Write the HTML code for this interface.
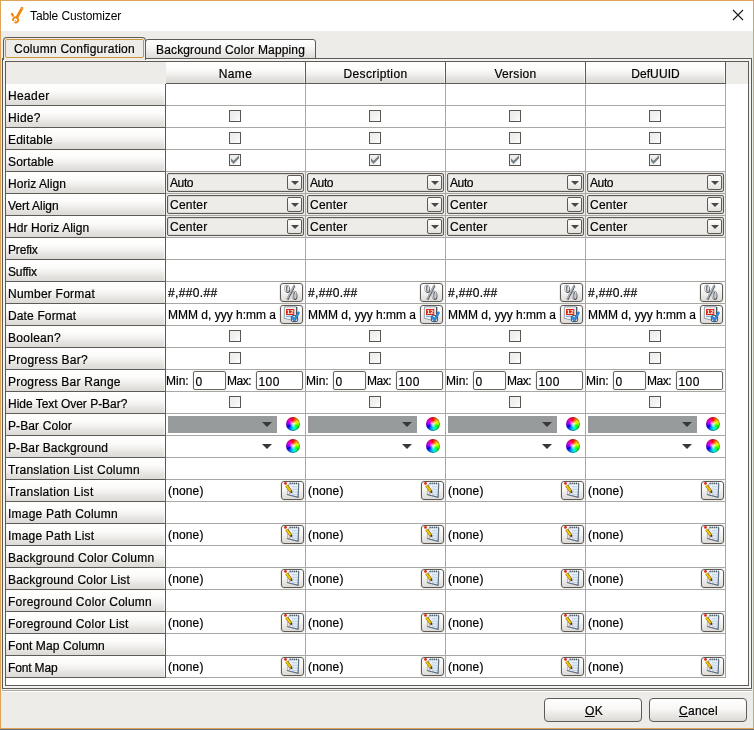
<!DOCTYPE html>
<html><head><meta charset="utf-8"><title>Table Customizer</title>
<style>
html,body{margin:0;padding:0;}
body{will-change:transform;-webkit-text-stroke:0.2px #000;width:754px;height:730px;overflow:hidden;background:#eeece9;font-family:"Liberation Sans",sans-serif;font-size:12px;color:#000;position:relative;}
div,span{box-sizing:border-box;}
.a{position:absolute;}
#win{left:0;top:0;width:754px;height:730px;border:1px solid #dea459;border-bottom:none;}
#wb1{left:0;top:728px;width:754px;height:1px;background:#dea459;}
#wb2{left:0;top:729px;width:754px;height:1px;background:#646c70;}
#title{left:1px;top:1px;width:752px;height:30px;background:#fff;}
#ttext{left:30px;top:8px;font-size:12px;line-height:16px;white-space:nowrap;letter-spacing:-0.1px;-webkit-text-stroke:0;}
.t{white-space:nowrap;line-height:14px;}
.rh{left:6px;width:160px;height:22px;border-right:1px solid #5e5b56;border-bottom:1px solid #5e5b56;background:linear-gradient(#ffffff 0%,#fdfdfc 30%,#f3f2f0 55%,#e4e2df 80%,#dddbd7 100%);box-shadow:inset -1px 0 0 rgba(255,255,255,.6);}
.rh span{position:absolute;left:2px;top:5px;line-height:14px;white-space:nowrap;}
.ch{top:62px;width:140px;height:22px;border-right:1px solid #5e5b56;border-bottom:1px solid #5e5b56;background:linear-gradient(#ffffff 0%,#fdfdfc 30%,#f3f2f0 55%,#e3e1de 80%,#dbd9d5 100%);box-shadow:inset -1px 0 0 rgba(255,255,255,.6);text-align:center;}
.ch span{position:absolute;left:0;right:0;top:5px;line-height:14px;text-align:center;}
.hl{left:166px;width:560px;height:1px;background:#aaa8a4;}
.vl{top:84px;width:1px;height:594px;background:#aaa8a4;}
.cb{width:12px;height:12px;border:1px solid #5a5752;background:linear-gradient(135deg,#ededec 0%,#f1f1f0 50%,#ffffff 100%);}
.cellbg{width:139px;height:21px;background:#eeece9;}
.combo{width:137px;height:19px;border:1px solid #5e5b56;border-radius:2px;background:#eeece9;box-shadow:inset 0 0 0 1px #d9d7d3;}
.combo span{position:absolute;left:2px;top:2px;line-height:14px;}
.cbtn{left:119px;top:1px;width:15px;height:15px;border:1px solid #5e5b56;border-radius:2px;background:linear-gradient(#ffffff,#e4e2de);}
.tri{width:0;height:0;border-left:4px solid transparent;border-right:4px solid transparent;border-top:4px solid #4a4744;}
.btn{width:23px;height:19px;border:1px solid #5e5b56;border-radius:3px;box-shadow:0 0 0 1px #efedea;background:linear-gradient(#ffffff 0%,#f6f5f4 45%,#dddad6 100%);}
.pct{left:1.8px;top:-4px;font-family:"Liberation Serif",serif;font-size:21px;line-height:24px;font-weight:bold;color:#e4e7ea;-webkit-text-stroke:0.5px #6d737a;text-shadow:0.9px 0.5px 0 #4c5157;transform:scaleX(.72);transform-origin:0 0;}
.tf{height:19px;border:1px solid #6a6762;border-radius:2px;background:#fff;box-shadow:0 0 0 1px #f3f2f0;}
.tf span{position:absolute;left:1.5px;top:3px;line-height:14px;}
.sw{width:109px;height:17px;}
.tri2{width:0;height:0;border-left:5.5px solid transparent;border-right:5.5px solid transparent;border-top:5.5px solid #383838;}
.wheel{width:14px;height:14px;border-radius:50%;background:radial-gradient(circle,rgba(255,255,255,.9) 0%,rgba(255,255,255,0) 38%),conic-gradient(#ff0000,#ffb000 12%,#e0ff00 20%,#00ff00 33%,#00ffd0 45%,#00b0ff 55%,#0000ff 67%,#b000ff 78%,#ff00c0 88%,#ff0000);box-shadow:inset 0 0 0 1px rgba(60,30,60,.45);}
.bigbtn{height:24px;border:1px solid #5e5b56;border-radius:4px;background:linear-gradient(#ffffff 0%,#f8f7f6 45%,#dcd9d5 100%);text-align:center;}
.bigbtn span{position:absolute;left:0;right:0;top:5px;line-height:14px;}
u{text-decoration:underline;}
</style></head><body>
<div class="a" id="title"></div>
<svg class="a" style="left:6px;top:4px" width="24" height="24" viewBox="6 4 24 24"><g fill="none" stroke="#f5850f" stroke-linecap="round"><path d="M22.1 8.2 L17.2 17" stroke-width="2.7"/><path d="M21.6 8.6 L16.6 17.6" stroke-width="1.6"/><path d="M13.05 20.35 A2.6 2.6 0 1 1 15.15 22.45" stroke-width="1.9"/><path d="M11.9 13.9 L12.9 15.7" stroke-width="2.2"/></g><circle cx="22" cy="8.3" r=".6" fill="#fbd2a4"/><circle cx="15.6" cy="20.6" r=".7" fill="#f7a047"/></svg>
<div class="a" id="ttext">Table Customizer</div>
<svg class="a" style="left:732px;top:9px" width="12" height="12" viewBox="0 0 12 12"><path d="M1 1 L11 11 M11 1 L1 11" stroke="#1a1a1a" stroke-width="1.1" fill="none"/></svg>
<div class="a" style="left:2px;top:58px;width:750px;height:631px;border:1px solid #5e5b56;background:#f4f3f1"></div>
<div class="a" style="left:1px;top:689px;width:752px;height:1px;background:#f3f2f0"></div>
<div class="a" style="left:1px;top:690px;width:752px;height:1px;background:#a9a8a4"></div>
<div class="a" style="left:1px;top:691px;width:752px;height:1px;background:#ffffff"></div>
<div class="a" style="left:1px;top:31px;width:1px;height:697px;background:#e9ebee"></div>
<div class="a" style="left:752px;top:31px;width:1px;height:697px;background:#e9ebee"></div>
<div class="a" style="left:145px;top:39px;width:171px;height:20px;border:1px solid #5e5b56;border-radius:3px 3px 0 0;background:linear-gradient(#ffffff 0%,#f8f7f6 40%,#dedbd7 100%)"><span class="a t" style="left:10px;top:3px;letter-spacing:0.15px">Background Color Mapping</span></div>
<div class="a" style="left:3px;top:37px;width:143px;height:23px;border:1px solid #5e5b56;border-bottom:none;border-radius:4px 4px 0 0;background:#eeece9"></div>
<div class="a" style="left:5px;top:39px;width:139px;height:19px;border:1px solid #c9973a;border-radius:2px;"><span class="a t" style="left:8px;top:2px;letter-spacing:0.245px">Column Configuration</span></div>
<div class="a" style="left:5px;top:61px;width:744px;height:625px;border:1px solid #5e5b56;background:#fff"></div>
<div class="a" style="left:6px;top:62px;width:160px;height:22px;background:#eeece9"></div>
<div class="a" style="left:726px;top:62px;width:22px;height:22px;background:#eeece9"></div>
<div class="a ch" style="left:166px"><span style="letter-spacing:0.433px">Name</span></div>
<div class="a ch" style="left:306px"><span style="letter-spacing:0.350px">Description</span></div>
<div class="a ch" style="left:446px"><span style="letter-spacing:0.283px">Version</span></div>
<div class="a ch" style="left:586px"><span style="letter-spacing:0.100px">DefUUID</span></div>
<div class="a rh" style="top:84px"><span style="letter-spacing:0.360px">Header</span></div>
<div class="a hl" style="top:105px"></div>
<div class="a rh" style="top:106px"><span style="letter-spacing:0.275px">Hide?</span></div>
<div class="a hl" style="top:127px"></div>
<div class="a rh" style="top:128px"><span style="letter-spacing:0.200px">Editable</span></div>
<div class="a hl" style="top:149px"></div>
<div class="a rh" style="top:150px"><span style="letter-spacing:0.157px">Sortable</span></div>
<div class="a hl" style="top:171px"></div>
<div class="a rh" style="top:172px"><span style="letter-spacing:0.045px">Horiz Align</span></div>
<div class="a hl" style="top:193px"></div>
<div class="a rh" style="top:194px"><span style="letter-spacing:0.000px">Vert Align</span></div>
<div class="a hl" style="top:215px"></div>
<div class="a rh" style="top:216px"><span style="letter-spacing:0.079px">Hdr Horiz Align</span></div>
<div class="a hl" style="top:237px"></div>
<div class="a rh" style="top:238px"><span style="letter-spacing:-0.180px">Prefix</span></div>
<div class="a hl" style="top:259px"></div>
<div class="a rh" style="top:260px"><span style="letter-spacing:-0.140px">Suffix</span></div>
<div class="a hl" style="top:281px"></div>
<div class="a rh" style="top:282px"><span style="letter-spacing:0.225px">Number Format</span></div>
<div class="a hl" style="top:303px"></div>
<div class="a rh" style="top:304px"><span style="letter-spacing:0.140px">Date Format</span></div>
<div class="a hl" style="top:325px"></div>
<div class="a rh" style="top:326px"><span style="letter-spacing:0.286px">Boolean?</span></div>
<div class="a hl" style="top:347px"></div>
<div class="a rh" style="top:348px"><span style="letter-spacing:0.242px">Progress Bar?</span></div>
<div class="a hl" style="top:369px"></div>
<div class="a rh" style="top:370px"><span style="letter-spacing:0.224px">Progress Bar Range</span></div>
<div class="a hl" style="top:391px"></div>
<div class="a rh" style="top:392px"><span style="letter-spacing:-0.022px">Hide Text Over P-Bar?</span></div>
<div class="a hl" style="top:413px"></div>
<div class="a rh" style="top:414px"><span style="letter-spacing:0.110px">P-Bar Color</span></div>
<div class="a hl" style="top:435px"></div>
<div class="a rh" style="top:436px"><span style="letter-spacing:0.120px">P-Bar Background</span></div>
<div class="a hl" style="top:457px"></div>
<div class="a rh" style="top:458px"><span style="letter-spacing:0.277px">Translation List Column</span></div>
<div class="a hl" style="top:479px"></div>
<div class="a rh" style="top:480px"><span style="letter-spacing:0.287px">Translation List</span></div>
<div class="a hl" style="top:501px"></div>
<div class="a rh" style="top:502px"><span style="letter-spacing:0.225px">Image Path Column</span></div>
<div class="a hl" style="top:523px"></div>
<div class="a rh" style="top:524px"><span style="letter-spacing:0.193px">Image Path List</span></div>
<div class="a hl" style="top:545px"></div>
<div class="a rh" style="top:546px"><span style="letter-spacing:0.245px">Background Color Column</span></div>
<div class="a hl" style="top:567px"></div>
<div class="a rh" style="top:568px"><span style="letter-spacing:0.190px">Background Color List</span></div>
<div class="a hl" style="top:589px"></div>
<div class="a rh" style="top:590px"><span style="letter-spacing:0.227px">Foreground Color Column</span></div>
<div class="a hl" style="top:611px"></div>
<div class="a rh" style="top:612px"><span style="letter-spacing:0.215px">Foreground Color List</span></div>
<div class="a hl" style="top:633px"></div>
<div class="a rh" style="top:634px"><span style="letter-spacing:0.100px">Font Map Column</span></div>
<div class="a hl" style="top:655px"></div>
<div class="a rh" style="top:656px"><span style="letter-spacing:-0.157px">Font Map</span></div>
<div class="a hl" style="top:677px"></div>
<div class="a vl" style="left:305px"></div>
<div class="a vl" style="left:445px"></div>
<div class="a vl" style="left:585px"></div>
<div class="a vl" style="left:725px"></div>
<div class="a cb" style="left:229px;top:110px"></div>
<div class="a cb" style="left:229px;top:132px"></div>
<div class="a cb" style="left:229px;top:154px"><svg class="a" style="left:0;top:0" width="10" height="10" viewBox="0 0 10 10"><path d="M1 3.2 L3.5 5.8 L9 0.2 L9 3.2 L3.5 8.9 L1 6.2 Z" fill="#758087"/></svg></div>
<div class="a cb" style="left:229px;top:330px"></div>
<div class="a cb" style="left:229px;top:352px"></div>
<div class="a cb" style="left:229px;top:396px"></div>
<div class="a cellbg" style="left:166px;top:172px"></div><div class="a combo" style="left:167px;top:173px"><span style="letter-spacing:-0.4px">Auto</span><div class="a cbtn"><div class="a tri" style="left:2.5px;top:5px"></div></div></div>
<div class="a cellbg" style="left:166px;top:194px"></div><div class="a combo" style="left:167px;top:195px"><span style="letter-spacing:0.24px">Center</span><div class="a cbtn"><div class="a tri" style="left:2.5px;top:5px"></div></div></div>
<div class="a cellbg" style="left:166px;top:216px"></div><div class="a combo" style="left:167px;top:217px"><span style="letter-spacing:0.24px">Center</span><div class="a cbtn"><div class="a tri" style="left:2.5px;top:5px"></div></div></div>
<span class="a t" style="left:168px;top:286px;letter-spacing:0.35px">#,##0.##</span><div class="a btn" style="left:280px;top:283px"><span class="a pct">%</span></div>
<span class="a t" style="left:168px;top:308px">MMM d, yyy h:mm a</span><div class="a btn" style="left:280px;top:305px"><svg class="a" style="left:0;top:0" width="21" height="17" viewBox="0 0 21 17"><path d="M3.4 0.8 L15.7 0.9 L15.4 15.4 L3.3 12.3 Z" fill="#f2f5f9" stroke="#7f8a95" stroke-width=".8"/><path d="M15.7 0.9 L15.5 8" stroke="#4a5661" stroke-width="1.3"/><path d="M4.5 0.5 H15" stroke="#a4adb6" stroke-width="1" stroke-dasharray="1 1"/><rect x="5" y="3" width="8.3" height="6" fill="#d62a10"/><text x="9.15" y="8.4" font-size="6.2" font-weight="bold" fill="#fff" stroke="none" text-anchor="middle" font-family="Liberation Sans, sans-serif" style="-webkit-text-stroke:0">12</text><path d="M5 10.4 H9.8" stroke="#7fb0e0" stroke-width="1.4"/><rect x="10.4" y="9.6" width="6.2" height="6" rx="1.4" fill="rgba(255,255,255,.55)" stroke="#3c5470" stroke-width="1"/><path d="M10.9 11 L13.5 14 L17.4 6.8" fill="none" stroke="#1d5ea6" stroke-width="2.5" stroke-linecap="round" stroke-linejoin="round"/><path d="M10.9 11 L13.5 14 L17.4 6.8" fill="none" stroke="#3492e6" stroke-width="1.5" stroke-linecap="round" stroke-linejoin="round"/></svg></div>
<span class="a t" style="left:166px;top:374px">Min:</span><div class="a tf" style="left:193px;top:371px;width:33px"><span>0</span></div><span class="a t" style="left:227px;top:374px;letter-spacing:-0.5px">Max:</span><div class="a tf" style="left:256px;top:371px;width:47px"><span style="letter-spacing:0.4px">100</span></div>
<div class="a sw" style="left:168px;top:416px;background:#979b9c"></div><div class="a tri2" style="left:262px;top:422px"></div><div class="a wheel" style="left:286px;top:417px"></div>
<div class="a tri2" style="left:262px;top:444px"></div><div class="a wheel" style="left:286px;top:439px"></div>
<span class="a t" style="left:168px;top:484px;letter-spacing:0.15px">(none)</span><div class="a btn" style="left:281px;top:481px"><svg class="a" style="left:0;top:0" width="21" height="17" viewBox="0 0 21 17"><path d="M7 1.6 L16.7 1.6 L16.1 15.3 L5.1 12.5 Z" fill="#eaf1f8" stroke="#94a6b7" stroke-width=".8"/><path d="M16.7 1.6 L16.1 15.3 L5.1 12.5" fill="none" stroke="#5f7183" stroke-width="1.2"/><path d="M7.6 1.4 H16.6" stroke="#4a5a6a" stroke-width="1.8" stroke-dasharray="1.1 1"/><path d="M10 4.6 L15 4.9 M10 7.1 L15 7.5 M10 9.6 L15 10.1 M10 12 L15 12.6" stroke="#b4c9df" stroke-width=".9"/><path d="M4.6 3.6 L9.2 9.9" stroke="#6b4e12" stroke-width="3"/><path d="M4.3 3.4 L8.9 9.7" stroke="#f4c400" stroke-width="2.1"/><path d="M8 9.9 L10 8.6 L10.4 11.4 Z" fill="#3a3020"/><circle cx="3.5" cy="1.4" r="1.45" fill="#df2b1d"/><path d="M6.8 11 L8.6 11.6" stroke="#e66a5a" stroke-width=".9"/></svg></div>
<span class="a t" style="left:168px;top:528px;letter-spacing:0.15px">(none)</span><div class="a btn" style="left:281px;top:525px"><svg class="a" style="left:0;top:0" width="21" height="17" viewBox="0 0 21 17"><path d="M7 1.6 L16.7 1.6 L16.1 15.3 L5.1 12.5 Z" fill="#eaf1f8" stroke="#94a6b7" stroke-width=".8"/><path d="M16.7 1.6 L16.1 15.3 L5.1 12.5" fill="none" stroke="#5f7183" stroke-width="1.2"/><path d="M7.6 1.4 H16.6" stroke="#4a5a6a" stroke-width="1.8" stroke-dasharray="1.1 1"/><path d="M10 4.6 L15 4.9 M10 7.1 L15 7.5 M10 9.6 L15 10.1 M10 12 L15 12.6" stroke="#b4c9df" stroke-width=".9"/><path d="M4.6 3.6 L9.2 9.9" stroke="#6b4e12" stroke-width="3"/><path d="M4.3 3.4 L8.9 9.7" stroke="#f4c400" stroke-width="2.1"/><path d="M8 9.9 L10 8.6 L10.4 11.4 Z" fill="#3a3020"/><circle cx="3.5" cy="1.4" r="1.45" fill="#df2b1d"/><path d="M6.8 11 L8.6 11.6" stroke="#e66a5a" stroke-width=".9"/></svg></div>
<span class="a t" style="left:168px;top:572px;letter-spacing:0.15px">(none)</span><div class="a btn" style="left:281px;top:569px"><svg class="a" style="left:0;top:0" width="21" height="17" viewBox="0 0 21 17"><path d="M7 1.6 L16.7 1.6 L16.1 15.3 L5.1 12.5 Z" fill="#eaf1f8" stroke="#94a6b7" stroke-width=".8"/><path d="M16.7 1.6 L16.1 15.3 L5.1 12.5" fill="none" stroke="#5f7183" stroke-width="1.2"/><path d="M7.6 1.4 H16.6" stroke="#4a5a6a" stroke-width="1.8" stroke-dasharray="1.1 1"/><path d="M10 4.6 L15 4.9 M10 7.1 L15 7.5 M10 9.6 L15 10.1 M10 12 L15 12.6" stroke="#b4c9df" stroke-width=".9"/><path d="M4.6 3.6 L9.2 9.9" stroke="#6b4e12" stroke-width="3"/><path d="M4.3 3.4 L8.9 9.7" stroke="#f4c400" stroke-width="2.1"/><path d="M8 9.9 L10 8.6 L10.4 11.4 Z" fill="#3a3020"/><circle cx="3.5" cy="1.4" r="1.45" fill="#df2b1d"/><path d="M6.8 11 L8.6 11.6" stroke="#e66a5a" stroke-width=".9"/></svg></div>
<span class="a t" style="left:168px;top:616px;letter-spacing:0.15px">(none)</span><div class="a btn" style="left:281px;top:613px"><svg class="a" style="left:0;top:0" width="21" height="17" viewBox="0 0 21 17"><path d="M7 1.6 L16.7 1.6 L16.1 15.3 L5.1 12.5 Z" fill="#eaf1f8" stroke="#94a6b7" stroke-width=".8"/><path d="M16.7 1.6 L16.1 15.3 L5.1 12.5" fill="none" stroke="#5f7183" stroke-width="1.2"/><path d="M7.6 1.4 H16.6" stroke="#4a5a6a" stroke-width="1.8" stroke-dasharray="1.1 1"/><path d="M10 4.6 L15 4.9 M10 7.1 L15 7.5 M10 9.6 L15 10.1 M10 12 L15 12.6" stroke="#b4c9df" stroke-width=".9"/><path d="M4.6 3.6 L9.2 9.9" stroke="#6b4e12" stroke-width="3"/><path d="M4.3 3.4 L8.9 9.7" stroke="#f4c400" stroke-width="2.1"/><path d="M8 9.9 L10 8.6 L10.4 11.4 Z" fill="#3a3020"/><circle cx="3.5" cy="1.4" r="1.45" fill="#df2b1d"/><path d="M6.8 11 L8.6 11.6" stroke="#e66a5a" stroke-width=".9"/></svg></div>
<span class="a t" style="left:168px;top:660px;letter-spacing:0.15px">(none)</span><div class="a btn" style="left:281px;top:657px"><svg class="a" style="left:0;top:0" width="21" height="17" viewBox="0 0 21 17"><path d="M7 1.6 L16.7 1.6 L16.1 15.3 L5.1 12.5 Z" fill="#eaf1f8" stroke="#94a6b7" stroke-width=".8"/><path d="M16.7 1.6 L16.1 15.3 L5.1 12.5" fill="none" stroke="#5f7183" stroke-width="1.2"/><path d="M7.6 1.4 H16.6" stroke="#4a5a6a" stroke-width="1.8" stroke-dasharray="1.1 1"/><path d="M10 4.6 L15 4.9 M10 7.1 L15 7.5 M10 9.6 L15 10.1 M10 12 L15 12.6" stroke="#b4c9df" stroke-width=".9"/><path d="M4.6 3.6 L9.2 9.9" stroke="#6b4e12" stroke-width="3"/><path d="M4.3 3.4 L8.9 9.7" stroke="#f4c400" stroke-width="2.1"/><path d="M8 9.9 L10 8.6 L10.4 11.4 Z" fill="#3a3020"/><circle cx="3.5" cy="1.4" r="1.45" fill="#df2b1d"/><path d="M6.8 11 L8.6 11.6" stroke="#e66a5a" stroke-width=".9"/></svg></div>
<div class="a cb" style="left:369px;top:110px"></div>
<div class="a cb" style="left:369px;top:132px"></div>
<div class="a cb" style="left:369px;top:154px"><svg class="a" style="left:0;top:0" width="10" height="10" viewBox="0 0 10 10"><path d="M1 3.2 L3.5 5.8 L9 0.2 L9 3.2 L3.5 8.9 L1 6.2 Z" fill="#758087"/></svg></div>
<div class="a cb" style="left:369px;top:330px"></div>
<div class="a cb" style="left:369px;top:352px"></div>
<div class="a cb" style="left:369px;top:396px"></div>
<div class="a cellbg" style="left:306px;top:172px"></div><div class="a combo" style="left:307px;top:173px"><span style="letter-spacing:-0.4px">Auto</span><div class="a cbtn"><div class="a tri" style="left:2.5px;top:5px"></div></div></div>
<div class="a cellbg" style="left:306px;top:194px"></div><div class="a combo" style="left:307px;top:195px"><span style="letter-spacing:0.24px">Center</span><div class="a cbtn"><div class="a tri" style="left:2.5px;top:5px"></div></div></div>
<div class="a cellbg" style="left:306px;top:216px"></div><div class="a combo" style="left:307px;top:217px"><span style="letter-spacing:0.24px">Center</span><div class="a cbtn"><div class="a tri" style="left:2.5px;top:5px"></div></div></div>
<span class="a t" style="left:308px;top:286px;letter-spacing:0.35px">#,##0.##</span><div class="a btn" style="left:420px;top:283px"><span class="a pct">%</span></div>
<span class="a t" style="left:308px;top:308px">MMM d, yyy h:mm a</span><div class="a btn" style="left:420px;top:305px"><svg class="a" style="left:0;top:0" width="21" height="17" viewBox="0 0 21 17"><path d="M3.4 0.8 L15.7 0.9 L15.4 15.4 L3.3 12.3 Z" fill="#f2f5f9" stroke="#7f8a95" stroke-width=".8"/><path d="M15.7 0.9 L15.5 8" stroke="#4a5661" stroke-width="1.3"/><path d="M4.5 0.5 H15" stroke="#a4adb6" stroke-width="1" stroke-dasharray="1 1"/><rect x="5" y="3" width="8.3" height="6" fill="#d62a10"/><text x="9.15" y="8.4" font-size="6.2" font-weight="bold" fill="#fff" stroke="none" text-anchor="middle" font-family="Liberation Sans, sans-serif" style="-webkit-text-stroke:0">12</text><path d="M5 10.4 H9.8" stroke="#7fb0e0" stroke-width="1.4"/><rect x="10.4" y="9.6" width="6.2" height="6" rx="1.4" fill="rgba(255,255,255,.55)" stroke="#3c5470" stroke-width="1"/><path d="M10.9 11 L13.5 14 L17.4 6.8" fill="none" stroke="#1d5ea6" stroke-width="2.5" stroke-linecap="round" stroke-linejoin="round"/><path d="M10.9 11 L13.5 14 L17.4 6.8" fill="none" stroke="#3492e6" stroke-width="1.5" stroke-linecap="round" stroke-linejoin="round"/></svg></div>
<span class="a t" style="left:306px;top:374px">Min:</span><div class="a tf" style="left:333px;top:371px;width:33px"><span>0</span></div><span class="a t" style="left:367px;top:374px;letter-spacing:-0.5px">Max:</span><div class="a tf" style="left:396px;top:371px;width:47px"><span style="letter-spacing:0.4px">100</span></div>
<div class="a sw" style="left:308px;top:416px;background:#979b9c"></div><div class="a tri2" style="left:402px;top:422px"></div><div class="a wheel" style="left:426px;top:417px"></div>
<div class="a tri2" style="left:402px;top:444px"></div><div class="a wheel" style="left:426px;top:439px"></div>
<span class="a t" style="left:308px;top:484px;letter-spacing:0.15px">(none)</span><div class="a btn" style="left:421px;top:481px"><svg class="a" style="left:0;top:0" width="21" height="17" viewBox="0 0 21 17"><path d="M7 1.6 L16.7 1.6 L16.1 15.3 L5.1 12.5 Z" fill="#eaf1f8" stroke="#94a6b7" stroke-width=".8"/><path d="M16.7 1.6 L16.1 15.3 L5.1 12.5" fill="none" stroke="#5f7183" stroke-width="1.2"/><path d="M7.6 1.4 H16.6" stroke="#4a5a6a" stroke-width="1.8" stroke-dasharray="1.1 1"/><path d="M10 4.6 L15 4.9 M10 7.1 L15 7.5 M10 9.6 L15 10.1 M10 12 L15 12.6" stroke="#b4c9df" stroke-width=".9"/><path d="M4.6 3.6 L9.2 9.9" stroke="#6b4e12" stroke-width="3"/><path d="M4.3 3.4 L8.9 9.7" stroke="#f4c400" stroke-width="2.1"/><path d="M8 9.9 L10 8.6 L10.4 11.4 Z" fill="#3a3020"/><circle cx="3.5" cy="1.4" r="1.45" fill="#df2b1d"/><path d="M6.8 11 L8.6 11.6" stroke="#e66a5a" stroke-width=".9"/></svg></div>
<span class="a t" style="left:308px;top:528px;letter-spacing:0.15px">(none)</span><div class="a btn" style="left:421px;top:525px"><svg class="a" style="left:0;top:0" width="21" height="17" viewBox="0 0 21 17"><path d="M7 1.6 L16.7 1.6 L16.1 15.3 L5.1 12.5 Z" fill="#eaf1f8" stroke="#94a6b7" stroke-width=".8"/><path d="M16.7 1.6 L16.1 15.3 L5.1 12.5" fill="none" stroke="#5f7183" stroke-width="1.2"/><path d="M7.6 1.4 H16.6" stroke="#4a5a6a" stroke-width="1.8" stroke-dasharray="1.1 1"/><path d="M10 4.6 L15 4.9 M10 7.1 L15 7.5 M10 9.6 L15 10.1 M10 12 L15 12.6" stroke="#b4c9df" stroke-width=".9"/><path d="M4.6 3.6 L9.2 9.9" stroke="#6b4e12" stroke-width="3"/><path d="M4.3 3.4 L8.9 9.7" stroke="#f4c400" stroke-width="2.1"/><path d="M8 9.9 L10 8.6 L10.4 11.4 Z" fill="#3a3020"/><circle cx="3.5" cy="1.4" r="1.45" fill="#df2b1d"/><path d="M6.8 11 L8.6 11.6" stroke="#e66a5a" stroke-width=".9"/></svg></div>
<span class="a t" style="left:308px;top:572px;letter-spacing:0.15px">(none)</span><div class="a btn" style="left:421px;top:569px"><svg class="a" style="left:0;top:0" width="21" height="17" viewBox="0 0 21 17"><path d="M7 1.6 L16.7 1.6 L16.1 15.3 L5.1 12.5 Z" fill="#eaf1f8" stroke="#94a6b7" stroke-width=".8"/><path d="M16.7 1.6 L16.1 15.3 L5.1 12.5" fill="none" stroke="#5f7183" stroke-width="1.2"/><path d="M7.6 1.4 H16.6" stroke="#4a5a6a" stroke-width="1.8" stroke-dasharray="1.1 1"/><path d="M10 4.6 L15 4.9 M10 7.1 L15 7.5 M10 9.6 L15 10.1 M10 12 L15 12.6" stroke="#b4c9df" stroke-width=".9"/><path d="M4.6 3.6 L9.2 9.9" stroke="#6b4e12" stroke-width="3"/><path d="M4.3 3.4 L8.9 9.7" stroke="#f4c400" stroke-width="2.1"/><path d="M8 9.9 L10 8.6 L10.4 11.4 Z" fill="#3a3020"/><circle cx="3.5" cy="1.4" r="1.45" fill="#df2b1d"/><path d="M6.8 11 L8.6 11.6" stroke="#e66a5a" stroke-width=".9"/></svg></div>
<span class="a t" style="left:308px;top:616px;letter-spacing:0.15px">(none)</span><div class="a btn" style="left:421px;top:613px"><svg class="a" style="left:0;top:0" width="21" height="17" viewBox="0 0 21 17"><path d="M7 1.6 L16.7 1.6 L16.1 15.3 L5.1 12.5 Z" fill="#eaf1f8" stroke="#94a6b7" stroke-width=".8"/><path d="M16.7 1.6 L16.1 15.3 L5.1 12.5" fill="none" stroke="#5f7183" stroke-width="1.2"/><path d="M7.6 1.4 H16.6" stroke="#4a5a6a" stroke-width="1.8" stroke-dasharray="1.1 1"/><path d="M10 4.6 L15 4.9 M10 7.1 L15 7.5 M10 9.6 L15 10.1 M10 12 L15 12.6" stroke="#b4c9df" stroke-width=".9"/><path d="M4.6 3.6 L9.2 9.9" stroke="#6b4e12" stroke-width="3"/><path d="M4.3 3.4 L8.9 9.7" stroke="#f4c400" stroke-width="2.1"/><path d="M8 9.9 L10 8.6 L10.4 11.4 Z" fill="#3a3020"/><circle cx="3.5" cy="1.4" r="1.45" fill="#df2b1d"/><path d="M6.8 11 L8.6 11.6" stroke="#e66a5a" stroke-width=".9"/></svg></div>
<span class="a t" style="left:308px;top:660px;letter-spacing:0.15px">(none)</span><div class="a btn" style="left:421px;top:657px"><svg class="a" style="left:0;top:0" width="21" height="17" viewBox="0 0 21 17"><path d="M7 1.6 L16.7 1.6 L16.1 15.3 L5.1 12.5 Z" fill="#eaf1f8" stroke="#94a6b7" stroke-width=".8"/><path d="M16.7 1.6 L16.1 15.3 L5.1 12.5" fill="none" stroke="#5f7183" stroke-width="1.2"/><path d="M7.6 1.4 H16.6" stroke="#4a5a6a" stroke-width="1.8" stroke-dasharray="1.1 1"/><path d="M10 4.6 L15 4.9 M10 7.1 L15 7.5 M10 9.6 L15 10.1 M10 12 L15 12.6" stroke="#b4c9df" stroke-width=".9"/><path d="M4.6 3.6 L9.2 9.9" stroke="#6b4e12" stroke-width="3"/><path d="M4.3 3.4 L8.9 9.7" stroke="#f4c400" stroke-width="2.1"/><path d="M8 9.9 L10 8.6 L10.4 11.4 Z" fill="#3a3020"/><circle cx="3.5" cy="1.4" r="1.45" fill="#df2b1d"/><path d="M6.8 11 L8.6 11.6" stroke="#e66a5a" stroke-width=".9"/></svg></div>
<div class="a cb" style="left:509px;top:110px"></div>
<div class="a cb" style="left:509px;top:132px"></div>
<div class="a cb" style="left:509px;top:154px"><svg class="a" style="left:0;top:0" width="10" height="10" viewBox="0 0 10 10"><path d="M1 3.2 L3.5 5.8 L9 0.2 L9 3.2 L3.5 8.9 L1 6.2 Z" fill="#758087"/></svg></div>
<div class="a cb" style="left:509px;top:330px"></div>
<div class="a cb" style="left:509px;top:352px"></div>
<div class="a cb" style="left:509px;top:396px"></div>
<div class="a cellbg" style="left:446px;top:172px"></div><div class="a combo" style="left:447px;top:173px"><span style="letter-spacing:-0.4px">Auto</span><div class="a cbtn"><div class="a tri" style="left:2.5px;top:5px"></div></div></div>
<div class="a cellbg" style="left:446px;top:194px"></div><div class="a combo" style="left:447px;top:195px"><span style="letter-spacing:0.24px">Center</span><div class="a cbtn"><div class="a tri" style="left:2.5px;top:5px"></div></div></div>
<div class="a cellbg" style="left:446px;top:216px"></div><div class="a combo" style="left:447px;top:217px"><span style="letter-spacing:0.24px">Center</span><div class="a cbtn"><div class="a tri" style="left:2.5px;top:5px"></div></div></div>
<span class="a t" style="left:448px;top:286px;letter-spacing:0.35px">#,##0.##</span><div class="a btn" style="left:560px;top:283px"><span class="a pct">%</span></div>
<span class="a t" style="left:448px;top:308px">MMM d, yyy h:mm a</span><div class="a btn" style="left:560px;top:305px"><svg class="a" style="left:0;top:0" width="21" height="17" viewBox="0 0 21 17"><path d="M3.4 0.8 L15.7 0.9 L15.4 15.4 L3.3 12.3 Z" fill="#f2f5f9" stroke="#7f8a95" stroke-width=".8"/><path d="M15.7 0.9 L15.5 8" stroke="#4a5661" stroke-width="1.3"/><path d="M4.5 0.5 H15" stroke="#a4adb6" stroke-width="1" stroke-dasharray="1 1"/><rect x="5" y="3" width="8.3" height="6" fill="#d62a10"/><text x="9.15" y="8.4" font-size="6.2" font-weight="bold" fill="#fff" stroke="none" text-anchor="middle" font-family="Liberation Sans, sans-serif" style="-webkit-text-stroke:0">12</text><path d="M5 10.4 H9.8" stroke="#7fb0e0" stroke-width="1.4"/><rect x="10.4" y="9.6" width="6.2" height="6" rx="1.4" fill="rgba(255,255,255,.55)" stroke="#3c5470" stroke-width="1"/><path d="M10.9 11 L13.5 14 L17.4 6.8" fill="none" stroke="#1d5ea6" stroke-width="2.5" stroke-linecap="round" stroke-linejoin="round"/><path d="M10.9 11 L13.5 14 L17.4 6.8" fill="none" stroke="#3492e6" stroke-width="1.5" stroke-linecap="round" stroke-linejoin="round"/></svg></div>
<span class="a t" style="left:446px;top:374px">Min:</span><div class="a tf" style="left:473px;top:371px;width:33px"><span>0</span></div><span class="a t" style="left:507px;top:374px;letter-spacing:-0.5px">Max:</span><div class="a tf" style="left:536px;top:371px;width:47px"><span style="letter-spacing:0.4px">100</span></div>
<div class="a sw" style="left:448px;top:416px;background:#979b9c"></div><div class="a tri2" style="left:542px;top:422px"></div><div class="a wheel" style="left:566px;top:417px"></div>
<div class="a tri2" style="left:542px;top:444px"></div><div class="a wheel" style="left:566px;top:439px"></div>
<span class="a t" style="left:448px;top:484px;letter-spacing:0.15px">(none)</span><div class="a btn" style="left:561px;top:481px"><svg class="a" style="left:0;top:0" width="21" height="17" viewBox="0 0 21 17"><path d="M7 1.6 L16.7 1.6 L16.1 15.3 L5.1 12.5 Z" fill="#eaf1f8" stroke="#94a6b7" stroke-width=".8"/><path d="M16.7 1.6 L16.1 15.3 L5.1 12.5" fill="none" stroke="#5f7183" stroke-width="1.2"/><path d="M7.6 1.4 H16.6" stroke="#4a5a6a" stroke-width="1.8" stroke-dasharray="1.1 1"/><path d="M10 4.6 L15 4.9 M10 7.1 L15 7.5 M10 9.6 L15 10.1 M10 12 L15 12.6" stroke="#b4c9df" stroke-width=".9"/><path d="M4.6 3.6 L9.2 9.9" stroke="#6b4e12" stroke-width="3"/><path d="M4.3 3.4 L8.9 9.7" stroke="#f4c400" stroke-width="2.1"/><path d="M8 9.9 L10 8.6 L10.4 11.4 Z" fill="#3a3020"/><circle cx="3.5" cy="1.4" r="1.45" fill="#df2b1d"/><path d="M6.8 11 L8.6 11.6" stroke="#e66a5a" stroke-width=".9"/></svg></div>
<span class="a t" style="left:448px;top:528px;letter-spacing:0.15px">(none)</span><div class="a btn" style="left:561px;top:525px"><svg class="a" style="left:0;top:0" width="21" height="17" viewBox="0 0 21 17"><path d="M7 1.6 L16.7 1.6 L16.1 15.3 L5.1 12.5 Z" fill="#eaf1f8" stroke="#94a6b7" stroke-width=".8"/><path d="M16.7 1.6 L16.1 15.3 L5.1 12.5" fill="none" stroke="#5f7183" stroke-width="1.2"/><path d="M7.6 1.4 H16.6" stroke="#4a5a6a" stroke-width="1.8" stroke-dasharray="1.1 1"/><path d="M10 4.6 L15 4.9 M10 7.1 L15 7.5 M10 9.6 L15 10.1 M10 12 L15 12.6" stroke="#b4c9df" stroke-width=".9"/><path d="M4.6 3.6 L9.2 9.9" stroke="#6b4e12" stroke-width="3"/><path d="M4.3 3.4 L8.9 9.7" stroke="#f4c400" stroke-width="2.1"/><path d="M8 9.9 L10 8.6 L10.4 11.4 Z" fill="#3a3020"/><circle cx="3.5" cy="1.4" r="1.45" fill="#df2b1d"/><path d="M6.8 11 L8.6 11.6" stroke="#e66a5a" stroke-width=".9"/></svg></div>
<span class="a t" style="left:448px;top:572px;letter-spacing:0.15px">(none)</span><div class="a btn" style="left:561px;top:569px"><svg class="a" style="left:0;top:0" width="21" height="17" viewBox="0 0 21 17"><path d="M7 1.6 L16.7 1.6 L16.1 15.3 L5.1 12.5 Z" fill="#eaf1f8" stroke="#94a6b7" stroke-width=".8"/><path d="M16.7 1.6 L16.1 15.3 L5.1 12.5" fill="none" stroke="#5f7183" stroke-width="1.2"/><path d="M7.6 1.4 H16.6" stroke="#4a5a6a" stroke-width="1.8" stroke-dasharray="1.1 1"/><path d="M10 4.6 L15 4.9 M10 7.1 L15 7.5 M10 9.6 L15 10.1 M10 12 L15 12.6" stroke="#b4c9df" stroke-width=".9"/><path d="M4.6 3.6 L9.2 9.9" stroke="#6b4e12" stroke-width="3"/><path d="M4.3 3.4 L8.9 9.7" stroke="#f4c400" stroke-width="2.1"/><path d="M8 9.9 L10 8.6 L10.4 11.4 Z" fill="#3a3020"/><circle cx="3.5" cy="1.4" r="1.45" fill="#df2b1d"/><path d="M6.8 11 L8.6 11.6" stroke="#e66a5a" stroke-width=".9"/></svg></div>
<span class="a t" style="left:448px;top:616px;letter-spacing:0.15px">(none)</span><div class="a btn" style="left:561px;top:613px"><svg class="a" style="left:0;top:0" width="21" height="17" viewBox="0 0 21 17"><path d="M7 1.6 L16.7 1.6 L16.1 15.3 L5.1 12.5 Z" fill="#eaf1f8" stroke="#94a6b7" stroke-width=".8"/><path d="M16.7 1.6 L16.1 15.3 L5.1 12.5" fill="none" stroke="#5f7183" stroke-width="1.2"/><path d="M7.6 1.4 H16.6" stroke="#4a5a6a" stroke-width="1.8" stroke-dasharray="1.1 1"/><path d="M10 4.6 L15 4.9 M10 7.1 L15 7.5 M10 9.6 L15 10.1 M10 12 L15 12.6" stroke="#b4c9df" stroke-width=".9"/><path d="M4.6 3.6 L9.2 9.9" stroke="#6b4e12" stroke-width="3"/><path d="M4.3 3.4 L8.9 9.7" stroke="#f4c400" stroke-width="2.1"/><path d="M8 9.9 L10 8.6 L10.4 11.4 Z" fill="#3a3020"/><circle cx="3.5" cy="1.4" r="1.45" fill="#df2b1d"/><path d="M6.8 11 L8.6 11.6" stroke="#e66a5a" stroke-width=".9"/></svg></div>
<span class="a t" style="left:448px;top:660px;letter-spacing:0.15px">(none)</span><div class="a btn" style="left:561px;top:657px"><svg class="a" style="left:0;top:0" width="21" height="17" viewBox="0 0 21 17"><path d="M7 1.6 L16.7 1.6 L16.1 15.3 L5.1 12.5 Z" fill="#eaf1f8" stroke="#94a6b7" stroke-width=".8"/><path d="M16.7 1.6 L16.1 15.3 L5.1 12.5" fill="none" stroke="#5f7183" stroke-width="1.2"/><path d="M7.6 1.4 H16.6" stroke="#4a5a6a" stroke-width="1.8" stroke-dasharray="1.1 1"/><path d="M10 4.6 L15 4.9 M10 7.1 L15 7.5 M10 9.6 L15 10.1 M10 12 L15 12.6" stroke="#b4c9df" stroke-width=".9"/><path d="M4.6 3.6 L9.2 9.9" stroke="#6b4e12" stroke-width="3"/><path d="M4.3 3.4 L8.9 9.7" stroke="#f4c400" stroke-width="2.1"/><path d="M8 9.9 L10 8.6 L10.4 11.4 Z" fill="#3a3020"/><circle cx="3.5" cy="1.4" r="1.45" fill="#df2b1d"/><path d="M6.8 11 L8.6 11.6" stroke="#e66a5a" stroke-width=".9"/></svg></div>
<div class="a cb" style="left:649px;top:110px"></div>
<div class="a cb" style="left:649px;top:132px"></div>
<div class="a cb" style="left:649px;top:154px"><svg class="a" style="left:0;top:0" width="10" height="10" viewBox="0 0 10 10"><path d="M1 3.2 L3.5 5.8 L9 0.2 L9 3.2 L3.5 8.9 L1 6.2 Z" fill="#758087"/></svg></div>
<div class="a cb" style="left:649px;top:330px"></div>
<div class="a cb" style="left:649px;top:352px"></div>
<div class="a cb" style="left:649px;top:396px"></div>
<div class="a cellbg" style="left:586px;top:172px"></div><div class="a combo" style="left:587px;top:173px"><span style="letter-spacing:-0.4px">Auto</span><div class="a cbtn"><div class="a tri" style="left:2.5px;top:5px"></div></div></div>
<div class="a cellbg" style="left:586px;top:194px"></div><div class="a combo" style="left:587px;top:195px"><span style="letter-spacing:0.24px">Center</span><div class="a cbtn"><div class="a tri" style="left:2.5px;top:5px"></div></div></div>
<div class="a cellbg" style="left:586px;top:216px"></div><div class="a combo" style="left:587px;top:217px"><span style="letter-spacing:0.24px">Center</span><div class="a cbtn"><div class="a tri" style="left:2.5px;top:5px"></div></div></div>
<span class="a t" style="left:588px;top:286px;letter-spacing:0.35px">#,##0.##</span><div class="a btn" style="left:700px;top:283px"><span class="a pct">%</span></div>
<span class="a t" style="left:588px;top:308px">MMM d, yyy h:mm a</span><div class="a btn" style="left:700px;top:305px"><svg class="a" style="left:0;top:0" width="21" height="17" viewBox="0 0 21 17"><path d="M3.4 0.8 L15.7 0.9 L15.4 15.4 L3.3 12.3 Z" fill="#f2f5f9" stroke="#7f8a95" stroke-width=".8"/><path d="M15.7 0.9 L15.5 8" stroke="#4a5661" stroke-width="1.3"/><path d="M4.5 0.5 H15" stroke="#a4adb6" stroke-width="1" stroke-dasharray="1 1"/><rect x="5" y="3" width="8.3" height="6" fill="#d62a10"/><text x="9.15" y="8.4" font-size="6.2" font-weight="bold" fill="#fff" stroke="none" text-anchor="middle" font-family="Liberation Sans, sans-serif" style="-webkit-text-stroke:0">12</text><path d="M5 10.4 H9.8" stroke="#7fb0e0" stroke-width="1.4"/><rect x="10.4" y="9.6" width="6.2" height="6" rx="1.4" fill="rgba(255,255,255,.55)" stroke="#3c5470" stroke-width="1"/><path d="M10.9 11 L13.5 14 L17.4 6.8" fill="none" stroke="#1d5ea6" stroke-width="2.5" stroke-linecap="round" stroke-linejoin="round"/><path d="M10.9 11 L13.5 14 L17.4 6.8" fill="none" stroke="#3492e6" stroke-width="1.5" stroke-linecap="round" stroke-linejoin="round"/></svg></div>
<span class="a t" style="left:586px;top:374px">Min:</span><div class="a tf" style="left:613px;top:371px;width:33px"><span>0</span></div><span class="a t" style="left:647px;top:374px;letter-spacing:-0.5px">Max:</span><div class="a tf" style="left:676px;top:371px;width:47px"><span style="letter-spacing:0.4px">100</span></div>
<div class="a sw" style="left:588px;top:416px;background:#979b9c"></div><div class="a tri2" style="left:682px;top:422px"></div><div class="a wheel" style="left:706px;top:417px"></div>
<div class="a tri2" style="left:682px;top:444px"></div><div class="a wheel" style="left:706px;top:439px"></div>
<span class="a t" style="left:588px;top:484px;letter-spacing:0.15px">(none)</span><div class="a btn" style="left:701px;top:481px"><svg class="a" style="left:0;top:0" width="21" height="17" viewBox="0 0 21 17"><path d="M7 1.6 L16.7 1.6 L16.1 15.3 L5.1 12.5 Z" fill="#eaf1f8" stroke="#94a6b7" stroke-width=".8"/><path d="M16.7 1.6 L16.1 15.3 L5.1 12.5" fill="none" stroke="#5f7183" stroke-width="1.2"/><path d="M7.6 1.4 H16.6" stroke="#4a5a6a" stroke-width="1.8" stroke-dasharray="1.1 1"/><path d="M10 4.6 L15 4.9 M10 7.1 L15 7.5 M10 9.6 L15 10.1 M10 12 L15 12.6" stroke="#b4c9df" stroke-width=".9"/><path d="M4.6 3.6 L9.2 9.9" stroke="#6b4e12" stroke-width="3"/><path d="M4.3 3.4 L8.9 9.7" stroke="#f4c400" stroke-width="2.1"/><path d="M8 9.9 L10 8.6 L10.4 11.4 Z" fill="#3a3020"/><circle cx="3.5" cy="1.4" r="1.45" fill="#df2b1d"/><path d="M6.8 11 L8.6 11.6" stroke="#e66a5a" stroke-width=".9"/></svg></div>
<span class="a t" style="left:588px;top:528px;letter-spacing:0.15px">(none)</span><div class="a btn" style="left:701px;top:525px"><svg class="a" style="left:0;top:0" width="21" height="17" viewBox="0 0 21 17"><path d="M7 1.6 L16.7 1.6 L16.1 15.3 L5.1 12.5 Z" fill="#eaf1f8" stroke="#94a6b7" stroke-width=".8"/><path d="M16.7 1.6 L16.1 15.3 L5.1 12.5" fill="none" stroke="#5f7183" stroke-width="1.2"/><path d="M7.6 1.4 H16.6" stroke="#4a5a6a" stroke-width="1.8" stroke-dasharray="1.1 1"/><path d="M10 4.6 L15 4.9 M10 7.1 L15 7.5 M10 9.6 L15 10.1 M10 12 L15 12.6" stroke="#b4c9df" stroke-width=".9"/><path d="M4.6 3.6 L9.2 9.9" stroke="#6b4e12" stroke-width="3"/><path d="M4.3 3.4 L8.9 9.7" stroke="#f4c400" stroke-width="2.1"/><path d="M8 9.9 L10 8.6 L10.4 11.4 Z" fill="#3a3020"/><circle cx="3.5" cy="1.4" r="1.45" fill="#df2b1d"/><path d="M6.8 11 L8.6 11.6" stroke="#e66a5a" stroke-width=".9"/></svg></div>
<span class="a t" style="left:588px;top:572px;letter-spacing:0.15px">(none)</span><div class="a btn" style="left:701px;top:569px"><svg class="a" style="left:0;top:0" width="21" height="17" viewBox="0 0 21 17"><path d="M7 1.6 L16.7 1.6 L16.1 15.3 L5.1 12.5 Z" fill="#eaf1f8" stroke="#94a6b7" stroke-width=".8"/><path d="M16.7 1.6 L16.1 15.3 L5.1 12.5" fill="none" stroke="#5f7183" stroke-width="1.2"/><path d="M7.6 1.4 H16.6" stroke="#4a5a6a" stroke-width="1.8" stroke-dasharray="1.1 1"/><path d="M10 4.6 L15 4.9 M10 7.1 L15 7.5 M10 9.6 L15 10.1 M10 12 L15 12.6" stroke="#b4c9df" stroke-width=".9"/><path d="M4.6 3.6 L9.2 9.9" stroke="#6b4e12" stroke-width="3"/><path d="M4.3 3.4 L8.9 9.7" stroke="#f4c400" stroke-width="2.1"/><path d="M8 9.9 L10 8.6 L10.4 11.4 Z" fill="#3a3020"/><circle cx="3.5" cy="1.4" r="1.45" fill="#df2b1d"/><path d="M6.8 11 L8.6 11.6" stroke="#e66a5a" stroke-width=".9"/></svg></div>
<span class="a t" style="left:588px;top:616px;letter-spacing:0.15px">(none)</span><div class="a btn" style="left:701px;top:613px"><svg class="a" style="left:0;top:0" width="21" height="17" viewBox="0 0 21 17"><path d="M7 1.6 L16.7 1.6 L16.1 15.3 L5.1 12.5 Z" fill="#eaf1f8" stroke="#94a6b7" stroke-width=".8"/><path d="M16.7 1.6 L16.1 15.3 L5.1 12.5" fill="none" stroke="#5f7183" stroke-width="1.2"/><path d="M7.6 1.4 H16.6" stroke="#4a5a6a" stroke-width="1.8" stroke-dasharray="1.1 1"/><path d="M10 4.6 L15 4.9 M10 7.1 L15 7.5 M10 9.6 L15 10.1 M10 12 L15 12.6" stroke="#b4c9df" stroke-width=".9"/><path d="M4.6 3.6 L9.2 9.9" stroke="#6b4e12" stroke-width="3"/><path d="M4.3 3.4 L8.9 9.7" stroke="#f4c400" stroke-width="2.1"/><path d="M8 9.9 L10 8.6 L10.4 11.4 Z" fill="#3a3020"/><circle cx="3.5" cy="1.4" r="1.45" fill="#df2b1d"/><path d="M6.8 11 L8.6 11.6" stroke="#e66a5a" stroke-width=".9"/></svg></div>
<span class="a t" style="left:588px;top:660px;letter-spacing:0.15px">(none)</span><div class="a btn" style="left:701px;top:657px"><svg class="a" style="left:0;top:0" width="21" height="17" viewBox="0 0 21 17"><path d="M7 1.6 L16.7 1.6 L16.1 15.3 L5.1 12.5 Z" fill="#eaf1f8" stroke="#94a6b7" stroke-width=".8"/><path d="M16.7 1.6 L16.1 15.3 L5.1 12.5" fill="none" stroke="#5f7183" stroke-width="1.2"/><path d="M7.6 1.4 H16.6" stroke="#4a5a6a" stroke-width="1.8" stroke-dasharray="1.1 1"/><path d="M10 4.6 L15 4.9 M10 7.1 L15 7.5 M10 9.6 L15 10.1 M10 12 L15 12.6" stroke="#b4c9df" stroke-width=".9"/><path d="M4.6 3.6 L9.2 9.9" stroke="#6b4e12" stroke-width="3"/><path d="M4.3 3.4 L8.9 9.7" stroke="#f4c400" stroke-width="2.1"/><path d="M8 9.9 L10 8.6 L10.4 11.4 Z" fill="#3a3020"/><circle cx="3.5" cy="1.4" r="1.45" fill="#df2b1d"/><path d="M6.8 11 L8.6 11.6" stroke="#e66a5a" stroke-width=".9"/></svg></div>
<div class="a bigbtn" style="left:544px;top:698px;width:98px"><span style="left:2px;letter-spacing:0.4px"><u>O</u>K</span></div>
<div class="a bigbtn" style="left:649px;top:698px;width:98px"><span style="left:1px;letter-spacing:0.28px"><u>C</u>ancel</span></div>
<div class="a" id="win"></div><div class="a" id="wb1"></div><div class="a" id="wb2"></div>
</body></html>
